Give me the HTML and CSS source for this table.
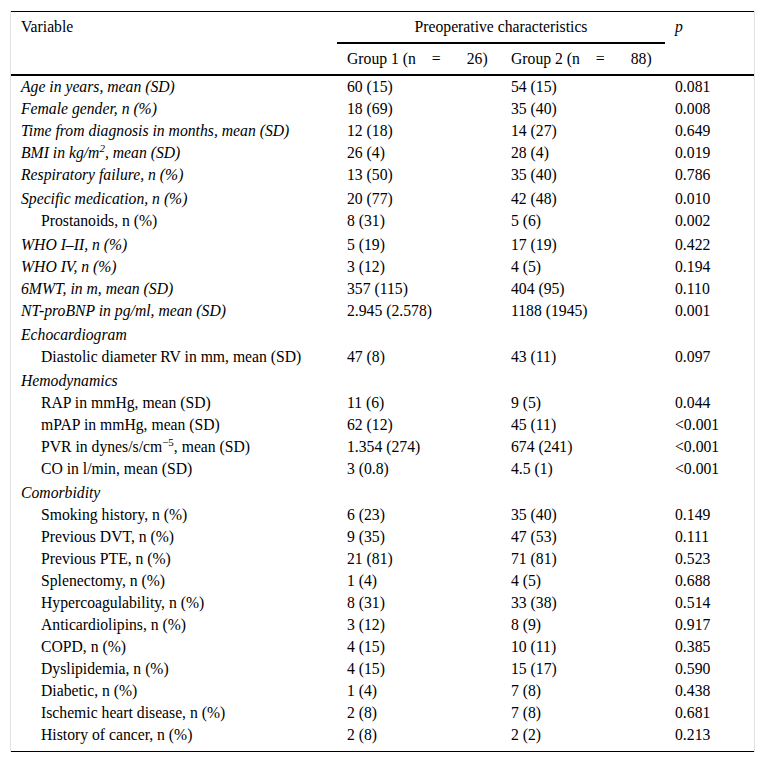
FILE: index.html
```html
<!DOCTYPE html>
<html>
<head>
<meta charset="utf-8">
<link rel="stylesheet" href="styles.css">
</head>
<body>
<div class="wrap">
<table class="tbl">
<colgroup><col class="c1"><col class="c2"><col class="c3"><col class="c4"></colgroup>
<thead>
<tr class="h1">
<th rowspan="2" class="top">Variable</th>
<th colspan="2" class="span">Preoperative characteristics</th>
<th rowspan="2" class="top"><i>p</i></th>
</tr>
<tr class="h2">
<th>Group 1 (n<span class="eq">=</span>26)</th>
<th>Group 2 (n<span class="eq">=</span>88)</th>
</tr>
</thead>
<tbody>
<tr><td><i>Age in years, mean (SD)</i></td><td>60 (15)</td><td>54 (15)</td><td>0.081</td></tr>
<tr><td><i>Female gender, n (%)</i></td><td>18 (69)</td><td>35 (40)</td><td>0.008</td></tr>
<tr><td><i>Time from diagnosis in months, mean (SD)</i></td><td>12 (18)</td><td>14 (27)</td><td>0.649</td></tr>
<tr><td><i>BMI in kg/m<sup>2</sup>, mean (SD)</i></td><td>26 (4)</td><td>28 (4)</td><td>0.019</td></tr>
<tr><td><i>Respiratory failure, n (%)</i></td><td>13 (50)</td><td>35 (40)</td><td>0.786</td></tr>
<tr class="gap"><td><i>Specific medication, n (%)</i></td><td>20 (77)</td><td>42 (48)</td><td>0.010</td></tr>
<tr><td class="sub">Prostanoids, n (%)</td><td>8 (31)</td><td>5 (6)</td><td>0.002</td></tr>
<tr class="gap"><td><i>WHO I–II, n (%)</i></td><td>5 (19)</td><td>17 (19)</td><td>0.422</td></tr>
<tr><td><i>WHO IV, n (%)</i></td><td>3 (12)</td><td>4 (5)</td><td>0.194</td></tr>
<tr><td><i>6MWT, in m, mean (SD)</i></td><td>357 (115)</td><td>404 (95)</td><td>0.110</td></tr>
<tr><td><i>NT-proBNP in pg/ml, mean (SD)</i></td><td>2.945 (2.578)</td><td>1188 (1945)</td><td>0.001</td></tr>
<tr class="gap"><td><i>Echocardiogram</i></td><td></td><td></td><td></td></tr>
<tr><td class="sub">Diastolic diameter RV in mm, mean (SD)</td><td>47 (8)</td><td>43 (11)</td><td>0.097</td></tr>
<tr class="gap"><td><i>Hemodynamics</i></td><td></td><td></td><td></td></tr>
<tr><td class="sub">RAP in mmHg, mean (SD)</td><td>11 (6)</td><td>9 (5)</td><td>0.044</td></tr>
<tr><td class="sub">mPAP in mmHg, mean (SD)</td><td>62 (12)</td><td>45 (11)</td><td>&lt;0.001</td></tr>
<tr><td class="sub">PVR in dynes/s/cm<sup>−5</sup>, mean (SD)</td><td>1.354 (274)</td><td>674 (241)</td><td>&lt;0.001</td></tr>
<tr><td class="sub">CO in l/min, mean (SD)</td><td>3 (0.8)</td><td>4.5 (1)</td><td>&lt;0.001</td></tr>
<tr class="gap"><td><i>Comorbidity</i></td><td></td><td></td><td></td></tr>
<tr><td class="sub">Smoking history, n (%)</td><td>6 (23)</td><td>35 (40)</td><td>0.149</td></tr>
<tr><td class="sub">Previous DVT, n (%)</td><td>9 (35)</td><td>47 (53)</td><td>0.111</td></tr>
<tr><td class="sub">Previous PTE, n (%)</td><td>21 (81)</td><td>71 (81)</td><td>0.523</td></tr>
<tr><td class="sub">Splenectomy, n (%)</td><td>1 (4)</td><td>4 (5)</td><td>0.688</td></tr>
<tr><td class="sub">Hypercoagulability, n (%)</td><td>8 (31)</td><td>33 (38)</td><td>0.514</td></tr>
<tr><td class="sub">Anticardiolipins, n (%)</td><td>3 (12)</td><td>8 (9)</td><td>0.917</td></tr>
<tr><td class="sub">COPD, n (%)</td><td>4 (15)</td><td>10 (11)</td><td>0.385</td></tr>
<tr><td class="sub">Dyslipidemia, n (%)</td><td>4 (15)</td><td>15 (17)</td><td>0.590</td></tr>
<tr><td class="sub">Diabetic, n (%)</td><td>1 (4)</td><td>7 (8)</td><td>0.438</td></tr>
<tr><td class="sub">Ischemic heart disease, n (%)</td><td>2 (8)</td><td>7 (8)</td><td>0.681</td></tr>
<tr class="last"><td class="sub">History of cancer, n (%)</td><td>2 (8)</td><td>2 (2)</td><td>0.213</td></tr>
</tbody>
</table>
</div>
</body>
</html>
```
FILE: styles.css
```css
html, body {
  margin: 0;
  padding: 0;
  background: #fff;
}
body {
  font-family: "Liberation Serif", "Times New Roman", serif;
  font-size: 15.7px;
  color: #000;
}
.wrap {
  margin: 11px 0 0 10px;
  width: 743px;
  border-left: 1px solid #e2e2e2;
  border-right: 1px solid #e2e2e2;
}
.tbl {
  width: 743px;
  table-layout: fixed;
  border-collapse: collapse;
  border-top: 1px solid #000;
  border-bottom: 1px solid #000;
}
.c1 { width: 326px; }
.c2 { width: 164px; }
.c3 { width: 164px; }
.c4 { width: 89px; }
th, td {
  padding: 3px 4px 3px 10px;
  line-height: 16px;
  text-align: left;
  vertical-align: top;
  white-space: nowrap;
}
th {
  font-weight: normal;
  padding-top: 7px;
  padding-bottom: 7px;
}
.h1 th { height: 16px; }
.h1 th.span {
  text-align: center;
  padding-left: 0;
  padding-right: 0;
  border-bottom: 2px solid #000;
}
.h2 th { height: 16px; }
thead { border-bottom: 2px solid #000; }
.eq {
  display: inline-block;
  margin: 0 26px 0 16px;
}
td.sub { padding-left: 30px; }
.gap td { padding-top: 5px; }
.last td { padding-bottom: 8px; }
sup {
  font-size: 0.7em;
  line-height: 0;
  vertical-align: 0.55em;
}
```
